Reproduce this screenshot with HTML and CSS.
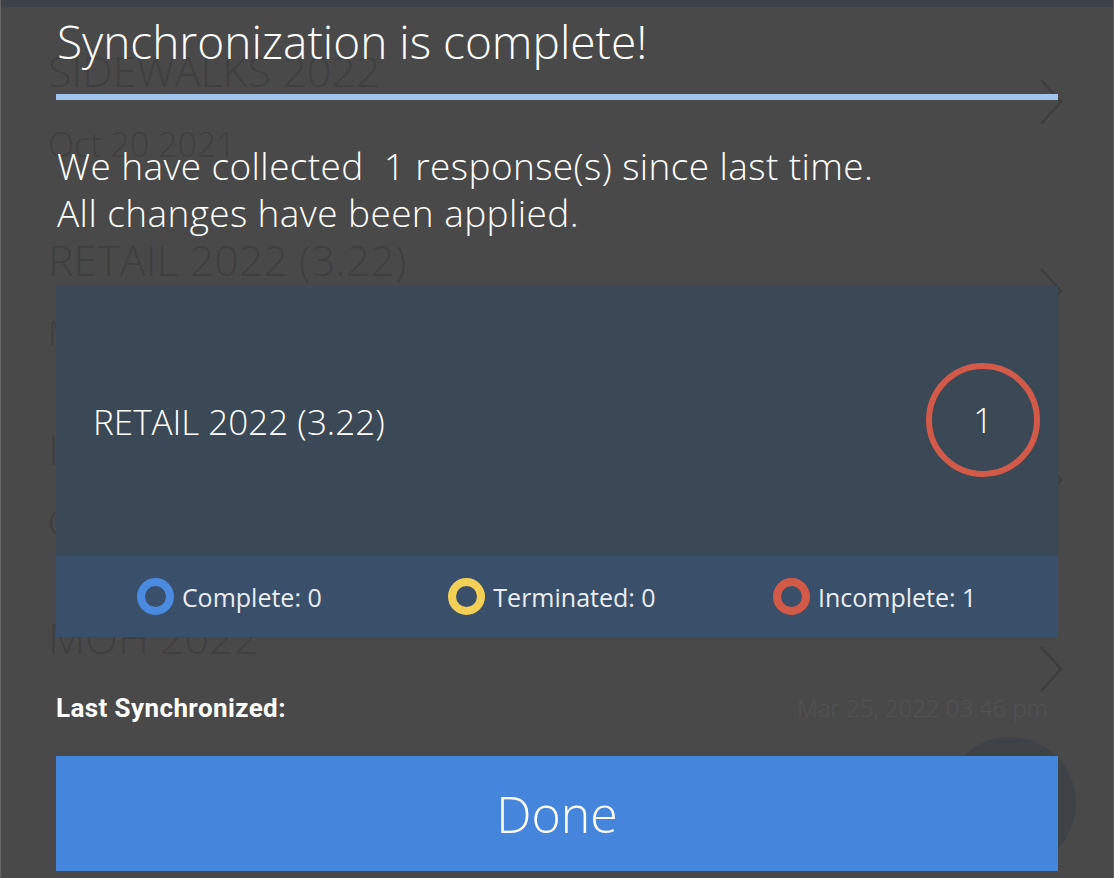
FILE: index.html
```html
<!DOCTYPE html>
<html lang="en">
<head>
<meta charset="utf-8">
<title>Synchronization</title>
<link rel="stylesheet" href="styles.css">
</head>
<body>
<div class="app">
  <div class="topbar"></div>
  <ul class="list">
    <li class="item">
      <div class="item-text">
        <div class="item-title">SIDEWALKS 2022</div>
        <div class="item-date">Oct 20 2021</div>
      </div>
      <svg class="chev" width="24" height="46" viewBox="0 0 24 46"><polyline points="2,1 22,23 2,45" fill="none" stroke="#3e3e3e" stroke-width="2.5"/></svg>
    </li>
    <li class="item">
      <div class="item-text">
        <div class="item-title">RETAIL 2022 (3.22)</div>
        <div class="item-date">Mar 22 2022</div>
      </div>
      <svg class="chev" width="24" height="46" viewBox="0 0 24 46"><polyline points="2,1 22,23 2,45" fill="none" stroke="#3e3e3e" stroke-width="2.5"/></svg>
    </li>
    <li class="item">
      <div class="item-text">
        <div class="item-title">INTERCEPT 2022</div>
        <div class="item-date">Oct 12 2021</div>
      </div>
      <svg class="chev" width="24" height="46" viewBox="0 0 24 46"><polyline points="2,1 22,23 2,45" fill="none" stroke="#3e3e3e" stroke-width="2.5"/></svg>
    </li>
    <li class="item">
      <div class="item-text">
        <div class="item-title">MOH 2022</div>
        <div class="item-date"></div>
      </div>
      <svg class="chev" width="24" height="46" viewBox="0 0 24 46"><polyline points="2,1 22,23 2,45" fill="none" stroke="#3e3e3e" stroke-width="2.5"/></svg>
    </li>
  </ul>
  <div class="fab"></div>

  <div class="overlay">
    <div class="dialog">
      <h1 class="dialog-title">Synchronization is complete!</h1>
      <div class="rule"></div>
      <p class="message">We have collected &nbsp;1 response(s) since last time.<br>All changes have been applied.</p>
      <div class="card">
        <div class="card-main">
          <span class="survey-name">RETAIL 2022 (3.22)</span>
          <span class="count-ring">1</span>
        </div>
        <div class="legend">
          <div class="legend-item"><span class="ring ring-blue"></span><span>Complete: 0</span></div>
          <div class="legend-item"><span class="ring ring-yellow"></span><span>Terminated: 0</span></div>
          <div class="legend-item"><span class="ring ring-red"></span><span>Incomplete: 1</span></div>
        </div>
      </div>
      <div class="sync-row">
        <span class="sync-label">Last Synchronized:</span>
        <span class="sync-value">Mar 25, 2022 03:46 pm</span>
      </div>
      <button class="done">Done</button>
    </div>
  </div>
</div>
</body>
</html>
```

FILE: styles.css
```css
* { box-sizing: border-box; }
html, body {
  margin: 0;
  padding: 0;
  background: #494949;
}
body {
  width: 1114px;
  height: 878px;
  overflow: hidden;
  font-family: "Open Sans", "Noto Sans", sans-serif;
}
.app {
  position: relative;
  width: 1114px;
  height: 878px;
  background: #494949;
  border-left: 1px solid #666666;
  border-right: 1px solid #5c5c5c;
  overflow: hidden;
}
.topbar {
  height: 7px;
  background: #3d4248;
}
.list {
  list-style: none;
  margin: 0;
  padding: 0;
}
.item {
  height: 189px;
  display: flex;
  align-items: center;
  justify-content: space-between;
  padding: 0 50px 0 47px;
}
.item-text {
  display: flex;
  flex-direction: column;
  align-self: flex-start;
  padding-top: 39px;
}
.item-title {
  font-size: 43px;
  line-height: 50px;
  font-weight: 300;
  color: #3f3f3f;
}
.item-date {
  margin-top: 26px;
  font-size: 34px;
  line-height: 44px;
  font-weight: 300;
  color: #3f3f3f;
}
.chev { display: block; }
.fab {
  position: absolute;
  left: 943px;
  top: 737px;
  width: 132px;
  height: 132px;
  border-radius: 50%;
  background: #3f4247;
}
.overlay {
  position: absolute;
  inset: 0;
}
.dialog {
  display: flex;
  flex-direction: column;
  padding: 13px 55px 0 55px;
  color: #ffffff;
}
.dialog-title {
  margin: 0;
  font-size: 46px;
  line-height: 56px;
  font-weight: 300;
  padding-left: 1px;
}
.rule {
  margin-top: 25px;
  height: 6px;
  background: #a0c4ee;
}
.message {
  margin: 42px 0 0 0;
  font-size: 37px;
  line-height: 47px;
  font-weight: 300;
  letter-spacing: 0.4px;
  padding-left: 1px;
}
.card {
  margin-top: 50px;
  display: flex;
  flex-direction: column;
}
.card-main {
  height: 270px;
  background: #3b4855;
  display: flex;
  align-items: center;
  justify-content: space-between;
  padding: 0 18px 0 37px;
}
.survey-name {
  font-size: 35px;
  font-weight: 300;
}
.count-ring {
  width: 114px;
  height: 114px;
  border-radius: 50%;
  border: 6px solid #d35a48;
  display: flex;
  align-items: center;
  justify-content: center;
  font-size: 34px;
  font-weight: 300;
  margin-top: -2px;
}
.legend {
  height: 81px;
  background: #3a506a;
  display: grid;
  grid-template-columns: repeat(3, 1fr);
  align-items: center;
  padding: 0 22px 0 12px;
}
.legend-item {
  display: flex;
  align-items: center;
  justify-content: center;
  gap: 8px;
  font-size: 25px;
  color: #e9edf2;
}
.ring {
  width: 37px;
  height: 37px;
  border-radius: 50%;
  border: 8px solid;
}
.ring-blue { border-color: #4a8ae0; }
.ring-yellow { border-color: #f4cf56; }
.ring-red { border-color: #d35a48; }
.sync-row {
  margin-top: 55px;
  height: 31px;
  display: flex;
  align-items: center;
  justify-content: space-between;
  padding-right: 10px;
}
.sync-label {
  font-family: "Roboto", "Liberation Sans", sans-serif;
  font-weight: 700;
  font-size: 26px;
  letter-spacing: 0.4px;
}
.sync-value {
  font-size: 24px;
  font-weight: 300;
  color: #535353;
}
.done {
  margin-top: 33px;
  height: 115px;
  border: none;
  background: #4586dc;
  color: #ffffff;
  font-family: "Open Sans", "Noto Sans", sans-serif;
  font-size: 50px;
  font-weight: 300;
  padding: 0;
}
```
